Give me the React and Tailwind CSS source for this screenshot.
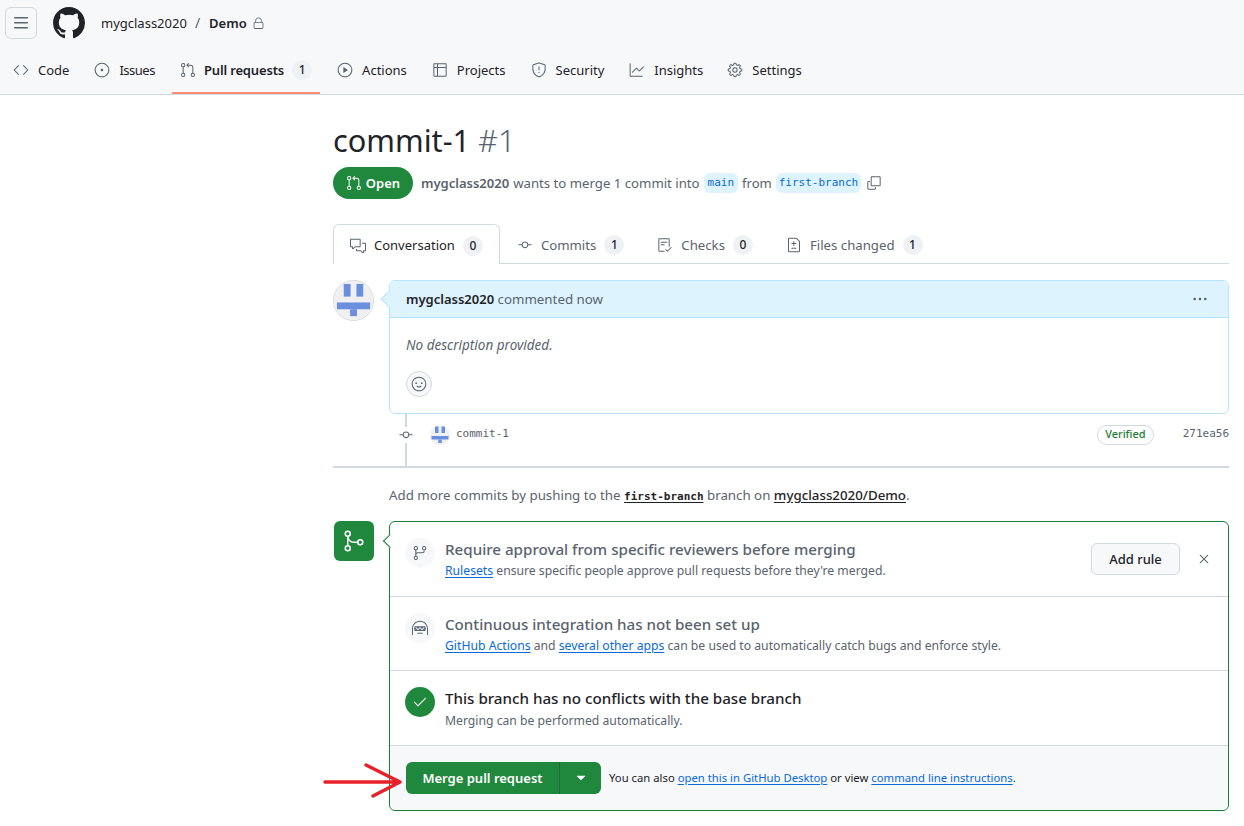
import React from "react";
import {
  GoCode,
  GoIssueOpened,
  GoGitPullRequest,
  GoPlay,
  GoTable,
  GoShield,
  GoGraph,
  GoGear,
  GoLock,
  GoCommentDiscussion,
  GoGitCommit,
  GoChecklist,
  GoFileDiff,
  GoCopy,
  GoKebabHorizontal,
  GoSmiley,
  GoGitMerge,
  GoGitBranch,
  GoHubot,
  GoCheck,
  GoX,
  GoTriangleDown,
} from "react-icons/go";

const navItems = [
  { label: "Code", icon: GoCode, cls: "mr-[9px] gap-[9px] text-[13px] border-transparent" },
  { label: "Issues", icon: GoIssueOpened, cls: "mr-[9px] gap-[9px] text-[13px] tracking-[-0.5px] border-transparent" },
  {
    label: "Pull requests",
    icon: GoGitPullRequest,
    count: 1,
    cls: "mr-[9px] gap-[8px] text-[13px] tracking-[-0.15px] font-semibold border-[#fd8c73]",
  },
  { label: "Actions", icon: GoPlay, cls: "mr-[9px] gap-[9px] text-[13px] border-transparent" },
  { label: "Projects", icon: GoTable, cls: "mr-[9px] gap-[9px] text-[13px] border-transparent" },
  { label: "Security", icon: GoShield, cls: "mr-[9px] gap-[9px] text-[13px] border-transparent" },
  { label: "Insights", icon: GoGraph, cls: "mr-[8px] gap-[9px] text-[13px] border-transparent" },
  { label: "Settings", icon: GoGear, cls: "mr-[9px] gap-[9px] text-[13px] border-transparent" },
];

const tabs = [
  { label: "Conversation", icon: GoCommentDiscussion, count: 0, active: true },
  { label: "Commits", icon: GoGitCommit, count: 1 },
  { label: "Checks", icon: GoChecklist, count: 0 },
  { label: "Files changed", icon: GoFileDiff, count: 1 },
];

const mono = { fontFamily: '"DejaVu Sans Mono", monospace' };

const GithubMark = ({ size }) => (
  <svg width={size} height={size} viewBox="0 0 16 16" fill="currentColor" className="ml-[16px] text-[#1f2328]">
    <path d="M8 0c4.42 0 8 3.58 8 8a8.013 8.013 0 0 1-5.45 7.59c-.4.08-.55-.17-.55-.38 0-.27.01-1.13.01-2.2 0-.75-.25-1.23-.54-1.48 1.78-.2 3.65-.88 3.65-3.95 0-.88-.31-1.59-.82-2.15.08-.2.36-1.02-.08-2.12 0 0-.67-.22-2.2.82-.64-.18-1.32-.27-2-.27-.68 0-1.36.09-2 .27-1.53-1.03-2.2-.82-2.2-.82-.44 1.1-.16 1.92-.08 2.12-.51.56-.82 1.28-.82 2.15 0 3.06 1.86 3.75 3.64 3.95-.23.2-.44.55-.51 1.07-.46.21-1.61.55-2.33-.66-.15-.24-.6-.83-1.23-.82-.67.01-.27.38.01.53.34.19.73.9.82 1.13.16.45.68 1.31 2.69.94 0 .67.01 1.3.01 1.49 0 .21-.15.45-.55.38A7.995 7.995 0 0 1 0 8c0-4.42 3.58-8 8-8Z" />
  </svg>
);

const ThreeBars = () => (
  <svg width="16" height="16" viewBox="0 0 16 16" fill="currentColor">
    <path d="M1 2.75A.75.75 0 0 1 1.75 2h12.5a.75.75 0 0 1 0 1.5H1.75A.75.75 0 0 1 1 2.75Zm0 5A.75.75 0 0 1 1.75 7h12.5a.75.75 0 0 1 0 1.5H1.75A.75.75 0 0 1 1 7.75ZM1.75 12h12.5a.75.75 0 0 1 0 1.5H1.75a.75.75 0 0 1 0-1.5Z" />
  </svg>
);

// github style identicon used for the avatar
const Identicon = ({ size }) => (
  <svg width={size} height={size} viewBox="0 0 40 40" className="rounded-full bg-[#f0f0f0]">
    <g fill="#6b8fdf">
      <rect x="10" y="3" width="7" height="13" />
      <rect x="23" y="3" width="7" height="13" />
      <rect x="3" y="22" width="34" height="7" />
      <rect x="16.5" y="29" width="7" height="7" />
    </g>
  </svg>
);

const Counter = ({ children }) => (
  <span className="flex h-[20px] min-w-[20px] items-center justify-center rounded-full bg-[#eff2f5] px-[6px] text-xs font-medium text-[#1f2328]">
    {children}
  </span>
);

const A = ({ children }) => (
  <a className="text-[#0969da] underline underline-offset-2">{children}</a>
);

const App = () => {
  return (
    <div
      className="relative min-h-[826px] w-[1244px] overflow-hidden bg-white text-sm text-[#1f2328]"
      style={{ fontFamily: '"Noto Sans", sans-serif' }}
    >
      {/* Header */}
      <header className="h-[95px] border-b border-[#d1d9e0] bg-[#f6f8fa]">
        <div className="flex h-[46px] items-center pl-[5px]">
          <button className="flex h-[32px] w-[32px] items-center justify-center rounded-md border border-[#d1d9e0] text-[#59636e]">
            <ThreeBars />
          </button>
          <GithubMark size={32} />
          <span className="ml-[16px] text-[13px]">mygclass2020</span>
          <span className="mx-[8px] text-[#59636e]">/</span>
          <span className="ml-[1px] text-[13px] font-semibold">Demo</span>
          <GoLock size={13} className="ml-[5px] text-[#59636e]" />
        </div>
        <nav className="flex h-[48px] pl-[5px]">
          {navItems.map((item) => {
            const Icon = item.icon;
            return (
              <div key={item.label} className={`flex items-center border-b-2 px-[8px] pt-[2px] ${item.cls}`}>
                <Icon size={16} className="text-[#59636e]" />
                <span>{item.label}</span>
                {item.count != null && <Counter>{item.count}</Counter>}
              </div>
            );
          })}
        </nav>
      </header>

      <main className="ml-[333px] w-[896px]">
        {/* Title */}
        <h1 className="mt-[23px] text-[30.7px] leading-[44px] font-normal">
          commit-1 <span className="font-light text-[#59636e]">#1</span>
        </h1>

        <div className="mt-[5px] flex h-[32px] items-center text-[13px] text-[#59636e]">
          <span className="flex h-[32px] w-[80px] items-center justify-center gap-[4px] rounded-full bg-[#1f883d] font-semibold text-white">
            <GoGitPullRequest size={16} />
            Open
          </span>
          <span className="ml-[8px] font-semibold">mygclass2020</span>
          <span className="ml-[4px] text-[13.2px]">wants to merge 1 commit into</span>
          <span className="ml-[4px] rounded-md bg-[#ddf4ff] px-[4px] py-[2px] text-[11px] text-[#0969da]" style={mono}>
            main
          </span>
          <span className="ml-[4px]">from</span>
          <span className="ml-[4px] rounded-md bg-[#ddf4ff] px-[3px] py-[2px] text-[11px] text-[#0969da]" style={mono}>
            first-branch
          </span>
          <GoCopy size={16} className="ml-[5px] text-[#59636e]" />
        </div>

        {/* Tabs */}
        <div className="mt-[25px] flex h-[40px] border-b border-[#d1d9e0] text-[13px]">
          {tabs.map((tab) => {
            const Icon = tab.icon;
            return (
              <div
                key={tab.label}
                className={`-mb-px flex items-center gap-[8px] pt-[2px] ${
                  tab.active
                    ? "rounded-t-md border border-b-0 border-[#d1d9e0] bg-white px-[16px]"
                    : "pr-[16px] pl-[17px] text-[13.2px]"
                }`}
              >
                <Icon size={16} className="text-[#59636e]" />
                <span className={tab.active ? "" : "text-[#59636e]"}>{tab.label}</span>
                <Counter>{tab.count}</Counter>
              </div>
            );
          })}
        </div>

        {/* Comment */}
        <div className="mt-[16px] flex">
          <div className="w-[56px] shrink-0">
            <div className="h-[41px] w-[41px] overflow-hidden rounded-full border border-[#d1d9e0]">
              <Identicon size={39} />
            </div>
          </div>
          <div className="relative flex-1 rounded-md border border-[#b6e3ff]">
            <div className="absolute top-[12px] -left-[7px] h-[12px] w-[12px] rotate-45 border-b border-l border-[#b6e3ff] bg-[#ddf4ff]" />
            <div className="relative flex h-[37px] items-center justify-between rounded-t-md border-b border-[#b6e3ff] bg-[#ddf4ff] pr-[20px] pl-[16px] text-[13px]">
              <span>
                <span className="font-semibold">mygclass2020</span>
                <span className="text-[13.3px] text-[#59636e]"> commented now</span>
              </span>
              <GoKebabHorizontal size={16} className="text-[#59636e]" />
            </div>
            <div className="px-[16px] pt-[17px] pb-[16px]">
              <p className="text-[13.5px] leading-[20px] text-[#59636e] italic">No description provided.</p>
              <div className="mt-[16px] flex h-[26px] w-[26px] items-center justify-center rounded-full border border-[#d1d9e0] bg-[#f6f8fa] text-[#59636e]">
                <GoSmiley size={16} />
              </div>
            </div>
          </div>
        </div>

        {/* Commit row */}
        <div className="flex h-[54px] border-b-2 border-[#d1d9e0] pl-[56px]">
          <div className="relative w-[41px] shrink-0 pt-[13px]">
            <div className="absolute top-0 bottom-0 left-[16px] w-[2px] bg-[#d1d9e0]" />
            <GoGitCommit size={16} className="relative ml-[9px] bg-white text-[#59636e]" />
          </div>
          <div className="flex h-[40px] flex-1 items-center justify-between pt-[1px] text-xs text-[#59636e]">
            <div className="flex items-center gap-[6px]">
              <Identicon size={20} />
              <span className="text-[11px]" style={mono}>
                commit-1
              </span>
            </div>
            <div className="flex items-center gap-[29px]">
              <span className="flex h-[20px] items-center rounded-full border border-[#d1d9e0] px-[7px] text-[11px] font-medium text-[#1a7f37]">
                Verified
              </span>
              <span className="text-[11px]" style={mono}>
                271ea56
              </span>
            </div>
          </div>
        </div>

        <p className="mt-[17px] ml-[56px] text-[13.3px] leading-[20px] text-[#59636e]">
          Add more commits by pushing to the{" "}
          <span className="text-[11px] font-bold text-[#1f2328] underline underline-offset-2" style={mono}>
            first-branch
          </span>{" "}
          branch on{" "}
          <span className="font-medium text-[#1f2328] underline underline-offset-2">mygclass2020/Demo</span>.
        </p>

        {/* Merge box */}
        <div className="mt-[14px] flex">
          <div className="w-[56px] shrink-0">
            <div className="ml-[1px] flex h-[40px] w-[40px] items-center justify-center rounded-md bg-[#1f883d] text-white">
              <GoGitMerge size={24} />
            </div>
          </div>
          <div className="relative flex-1 rounded-md border border-[#1a7f37]">
            <div className="absolute top-[14px] -left-[5px] h-[10px] w-[10px] rotate-45 border-b border-l border-[#1a7f37] bg-white" />

            <div className="relative flex h-[75px] items-start border-b border-[#d1d9e0] pt-[16px] pr-[16px] pl-[15px]">
              <div className="flex h-[30px] w-[30px] items-center justify-center rounded-full bg-[#f6f8fa] text-[#59636e]">
                <GoGitBranch size={16} />
              </div>
              <div className="ml-[10px] flex-1">
                <div className="text-[15.15px] leading-[22px] font-medium text-[#59636e]">
                  Require approval from specific reviewers before merging
                </div>
                <div className="mt-[3px] text-[12.2px] leading-[16px] text-[#59636e]">
                  <A>Rulesets</A> ensure specific people approve pull requests before they're merged.
                </div>
              </div>
              <button className="mt-[5px] h-[32px] w-[89px] rounded-md border border-[#d1d9e0] bg-[#f6f8fa] text-[13px] font-medium">
                Add rule
              </button>
              <GoX size={16} className="mt-[13px] ml-[16px] text-[#59636e]" />
            </div>

            <div className="flex h-[74px] items-start border-b border-[#d1d9e0] pt-[16px] pr-[16px] pl-[15px]">
              <div className="flex h-[30px] w-[30px] items-center justify-center rounded-full bg-[#f6f8fa] text-[#59636e]">
                <GoHubot size={16} />
              </div>
              <div className="ml-[10px] flex-1">
                <div className="text-[15.15px] leading-[22px] font-medium text-[#59636e]">
                  Continuous integration has not been set up
                </div>
                <div className="mt-[3px] text-[12.2px] leading-[16px] text-[#59636e]">
                  <A>GitHub Actions</A> and <A>several other apps</A> can be used to automatically catch bugs and
                  enforce style.
                </div>
              </div>
            </div>

            <div className="flex h-[75px] items-start border-b border-[#d1d9e0] pt-[16px] pr-[16px] pl-[15px]">
              <div className="flex h-[30px] w-[30px] items-center justify-center rounded-full bg-[#1f883d] text-white">
                <GoCheck size={16} />
              </div>
              <div className="ml-[10px] flex-1">
                <div className="text-[15.15px] leading-[22px] font-medium">
                  This branch has no conflicts with the base branch
                </div>
                <div className="mt-[4px] text-[12.2px] leading-[16px] text-[#59636e]">
                  Merging can be performed automatically.
                </div>
              </div>
            </div>

            <div className="flex h-[64px] items-center rounded-b-md bg-[#f6f8fa] px-[16px] text-[11.3px]">
              <div className="flex h-[32px] w-[195px] rounded-md bg-[#1f883d] text-white">
                <span className="flex w-[154px] items-center justify-center border-r border-[#1a7236] text-[13px] font-semibold">
                  Merge pull request
                </span>
                <span className="flex flex-1 items-center justify-center">
                  <GoTriangleDown size={16} />
                </span>
              </div>
              <span className="ml-[8px]">
                You can also <A>open this in GitHub Desktop</A> or view <A>command line instructions</A>.
              </span>
            </div>
          </div>
        </div>
      </main>

      {/* Red annotation arrow drawn over the screenshot */}
      <svg className="absolute top-[760px] left-[320px]" width="84" height="40" viewBox="0 0 84 40" fill="none">
        <path
          d="M5 22 H80 M46 5 L80 22 L53 36"
          stroke="#e8202a"
          strokeWidth="3.5"
          strokeLinecap="round"
          strokeLinejoin="round"
        />
      </svg>
    </div>
  );
};

export default App;
